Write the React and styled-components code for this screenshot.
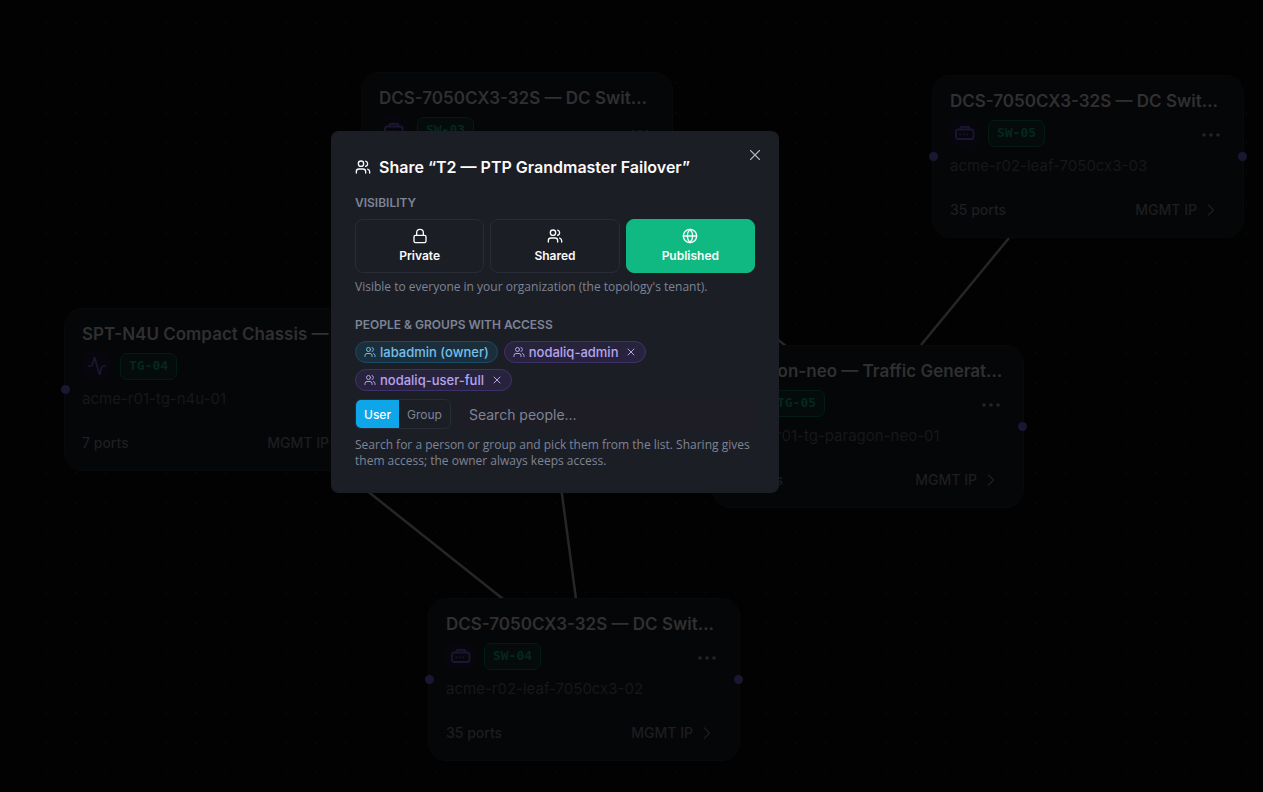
import React, { useState } from "react"
import styled, { createGlobalStyle } from "styled-components"
import { Activity, ChevronRight, Globe, Lock, Users, X } from "lucide-react"

const nodes = [
  { id: "SW-03", x: 361, y: 72, title: "DCS-7050CX3-32S — DC Swit…", host: "acme-r02-leaf-7050cx3-01", ports: 35 },
  { id: "SW-05", x: 932, y: 75, title: "DCS-7050CX3-32S — DC Swit…", host: "acme-r02-leaf-7050cx3-03", ports: 35 },
  { id: "TG-04", x: 64, y: 308, title: "SPT-N4U Compact Chassis — T…", host: "acme-r01-tg-n4u-01", ports: 7, tester: true },
  { id: "TG-05", x: 712, y: 345, title: "Paragon-neo — Traffic Generat…", host: "acme-r01-tg-paragon-neo-01", ports: 12, tester: true },
  { id: "SW-04", x: 428, y: 598, title: "DCS-7050CX3-32S — DC Swit…", host: "acme-r02-leaf-7050cx3-02", ports: 35 },
]

const edges = [
  [1009, 238, 921, 345],
  [341, 470, 503, 599],
  [520, 180, 576, 599],
  [572, 180, 786, 346],
]

const levels = [
  { id: "private", label: "Private", Icon: Lock },
  { id: "shared", label: "Shared", Icon: Users },
  { id: "published", label: "Published", Icon: Globe },
]

const SwitchIcon = () => (
  <svg width="20" height="16" viewBox="0 0 20 16" fill="none" stroke="currentColor" strokeWidth="1.8">
    <rect x="1" y="4.5" width="17.5" height="9.5" rx="2" />
    <path d="M5.5 4.5V2.8a1 1 0 0 1 1-1h6.8a1 1 0 0 1 1 1v1.7" />
    <path d="M4.5 9.3h1.4M8 9.3h1.4M11.5 9.3h1.4" />
  </svg>
)

const Node = ({ node }) => (
  <Card style={{ left: node.x, top: node.y }}>
    <Handle $side="left" />
    <Handle $side="right" />
    <CardTitle>{node.title}</CardTitle>
    <CardMeta>
      <Tile>
        {node.tester ? <Activity size={20} strokeWidth={2} /> : <SwitchIcon />}
      </Tile>
      <Badge>{node.id}</Badge>
      <MoreButton aria-label="More">
        <svg width="18" height="4" viewBox="0 0 18 4" fill="currentColor">
          <circle cx="2" cy="2" r="1.8" />
          <circle cx="9" cy="2" r="1.8" />
          <circle cx="16" cy="2" r="1.8" />
        </svg>
      </MoreButton>
    </CardMeta>
    <Host>{node.host}</Host>
    <CardFooter>
      <span>{node.ports} ports</span>
      <Mgmt>
        MGMT IP <ChevronRight size={20} strokeWidth={1.5} />
      </Mgmt>
    </CardFooter>
  </Card>
)

const App = () => {
  const [level, setLevel] = useState("published")
  const [kind, setKind] = useState("User")
  const [people, setPeople] = useState(["nodaliq-admin", "nodaliq-user-full"])

  return (
    <>
      <GlobalStyle />
      <Canvas>
        <Edges>
          {edges.map(([x1, y1, x2, y2]) => (
            <line key={`${x1}-${x2}`} x1={x1} y1={y1} x2={x2} y2={y2} />
          ))}
        </Edges>
        {nodes.map(node => (
          <Node key={node.id} node={node} />
        ))}
      </Canvas>
      <Overlay>
        <Dialog role="dialog" aria-labelledby="share-title">
          <CloseButton aria-label="Close">
            <X size={18} strokeWidth={1.5} />
          </CloseButton>
          <Title id="share-title">
            <Users size={16} strokeWidth={2} />
            Share “T2 — PTP Grandmaster Failover”
          </Title>

          <Section>
            <Label>Visibility</Label>
            <Group>
              <Levels>
                {levels.map(({ id, label, Icon }) => (
                  <LevelButton key={id} $active={level === id} onClick={() => setLevel(id)}>
                    <Icon size={16} />
                    {label}
                  </LevelButton>
                ))}
              </Levels>
              <Hint>Visible to everyone in your organization (the topology's tenant).</Hint>
            </Group>
          </Section>

          <Section>
            <Label>People &amp; groups with access</Label>
            <Chips>
              <Chip $owner>
                <Users size={12} />
                labadmin (owner)
              </Chip>
              {people.map(name => (
                <Chip key={name}>
                  <Users size={12} />
                  {name}
                  <RemoveButton
                    aria-label={`Remove ${name}`}
                    onClick={() => setPeople(people.filter(p => p !== name))}
                  >
                    <X size={12} />
                  </RemoveButton>
                </Chip>
              ))}
            </Chips>
            <SearchRow>
              <Toggle>
                {["User", "Group"].map(k => (
                  <ToggleButton key={k} $active={kind === k} onClick={() => setKind(k)}>
                    {k}
                  </ToggleButton>
                ))}
              </Toggle>
              <SearchInput aria-label="Search people" placeholder="Search people…" />
            </SearchRow>
            <Hint>
              Search for a person or group and pick them from the list. Sharing gives them access;
              the owner always keeps access.
            </Hint>
          </Section>
        </Dialog>
      </Overlay>
    </>
  )
}

export default App

const GlobalStyle = createGlobalStyle`
  * {
    box-sizing: border-box;
  }
  body {
    margin: 0;
    background: #020202;
    font-family: Inter, sans-serif;
  }
  button {
    font: inherit;
    color: inherit;
    background: none;
    border: 0;
    padding: 0;
    cursor: pointer;
  }
  svg {
    flex: none;
  }
`

const Canvas = styled.main`
  position: relative;
  height: 100vh;
  overflow: hidden;
  background: radial-gradient(circle, #070708 1px, transparent 1px) 1px 8px / 30px 30px;
`

const Edges = styled.svg`
  position: absolute;
  width: 100%;
  height: 100%;
  stroke: #262626;
  stroke-width: 2.5;
`

const Card = styled.article`
  position: absolute;
  width: 312px;
  height: 163px;
  padding: 14px 17px;
  display: flex;
  flex-direction: column;
  background: #050608;
  border: 1px solid #08090b;
  border-radius: 18px;
`

const Handle = styled.span`
  position: absolute;
  top: 76px;
  ${({ $side }) => $side}: -4px;
  width: 9px;
  height: 9px;
  border-radius: 50%;
  background: #1b1733;
`

const CardTitle = styled.h3`
  margin: 0;
  font-size: 17px;
  line-height: 22px;
  font-weight: 600;
  color: #303030;
  white-space: nowrap;
`

const CardMeta = styled.div`
  display: flex;
  align-items: center;
  gap: 9px;
  margin-top: 7px;
`

const Tile = styled.span`
  display: flex;
  align-items: center;
  justify-content: center;
  width: 29px;
  height: 28px;
  border-radius: 8px;
  background: #07060c;
  color: #1b1733;
`

const Badge = styled.span`
  width: 57px;
  height: 27px;
  border: 1px solid #031c12;
  border-radius: 7px;
  background: #040b0a;
  color: #04281d;
  font-family: "DejaVu Sans Mono", monospace;
  font-size: 13px;
  line-height: 24px;
  font-weight: 700;
  text-align: center;
`

const MoreButton = styled.button`
  display: flex;
  margin: 4px 6px 0 auto;
  color: #242526;
`

const Host = styled.div`
  margin-top: 8px;
  font-size: 15px;
  line-height: 22px;
  color: #17181a;
`

const CardFooter = styled.div`
  display: flex;
  justify-content: space-between;
  margin-top: 22px;
  font-size: 14px;
  line-height: 22px;
  font-weight: 500;
  color: #1d1e20;
`

const Mgmt = styled.span`
  display: flex;
  align-items: center;
  gap: 4px;
  padding-right: 5px;
`

const Overlay = styled.div`
  position: fixed;
  inset: 0;
  display: flex;
  align-items: center;
  justify-content: center;
  padding: 0 153px 168px 0;
`

const Dialog = styled.section`
  position: relative;
  width: 448px;
  padding: 24px;
  display: flex;
  flex-direction: column;
  gap: 16px;
  border-radius: 8px;
  background: #1c1e26;
  color: #fafafa;
`

const CloseButton = styled.button`
  position: absolute;
  top: 15px;
  right: 15px;
  display: flex;
  color: #b4b5b8;
`

const Title = styled.h2`
  display: flex;
  align-items: center;
  gap: 8px;
  margin: 0;
  font-size: 16px;
  line-height: 24px;
  font-weight: 600;
`

const Section = styled.div`
  display: flex;
  flex-direction: column;
  gap: 8px;
  margin-bottom: 6px;

  &:last-child {
    margin-bottom: 0;
  }
`

const Group = styled.div`
  display: flex;
  flex-direction: column;
  gap: 6px;
`

const Label = styled.div`
  font-size: 12px;
  line-height: 16px;
  font-weight: 600;
  text-transform: uppercase;
  color: #7d8495;
`

const Levels = styled.div`
  display: grid;
  grid-template-columns: repeat(3, 1fr);
  gap: 6px;
`

const LevelButton = styled.button`
  display: flex;
  flex-direction: column;
  align-items: center;
  gap: 4px;
  padding: 8px;
  border: 1px solid ${({ $active }) => ($active ? "#10b981" : "#292c37")};
  border-radius: 8px;
  background: ${({ $active }) => ($active ? "#10b981" : "transparent")};
  font-size: 12px;
  line-height: 16px;
  font-weight: 600;
`

const Hint = styled.p`
  margin: 0;
  font-family: "Open Sans", sans-serif;
  font-size: 12px;
  line-height: 16px;
  color: #7d8495;
`

const Chips = styled.div`
  display: flex;
  flex-wrap: wrap;
  gap: 6px;
`

const Chip = styled.span`
  display: flex;
  align-items: center;
  gap: 4px;
  height: 22px;
  padding: 0 8px;
  border: 1px solid ${({ $owner }) => ($owner ? "#174c66" : "#40306a")};
  border-radius: 11px;
  background: ${({ $owner }) => ($owner ? "#1b2e3c" : "#28233c")};
  color: ${({ $owner }) => ($owner ? "#74c0ea" : "#b7a4ef")};
  font-size: 13px;
  line-height: 16px;
  font-weight: 500;
`

const RemoveButton = styled.button`
  display: flex;
  margin: 0 0 0 3px;
`

const SearchRow = styled.div`
  display: flex;
  gap: 8px;
`

const Toggle = styled.div`
  display: flex;
  height: 30px;
  border: 1px solid #292c37;
  border-radius: 6px;
  overflow: hidden;
`

const ToggleButton = styled.button`
  padding: 0 8px;
  font-size: 12px;
  font-weight: ${({ $active }) => ($active ? 500 : 400)};
  background: ${({ $active }) => ($active ? "#0ea5e9" : "transparent")};
  color: ${({ $active }) => ($active ? "#fff" : "#7d8495")};
`

const SearchInput = styled.input`
  flex: 1;
  min-width: 0;
  height: 30px;
  padding: 0 10px;
  border: 0;
  border-radius: 6px;
  background: #1e1d25;
  color: #fafafa;
  font: 14px Inter, sans-serif;

  &::placeholder {
    color: #7d8495;
  }
`
